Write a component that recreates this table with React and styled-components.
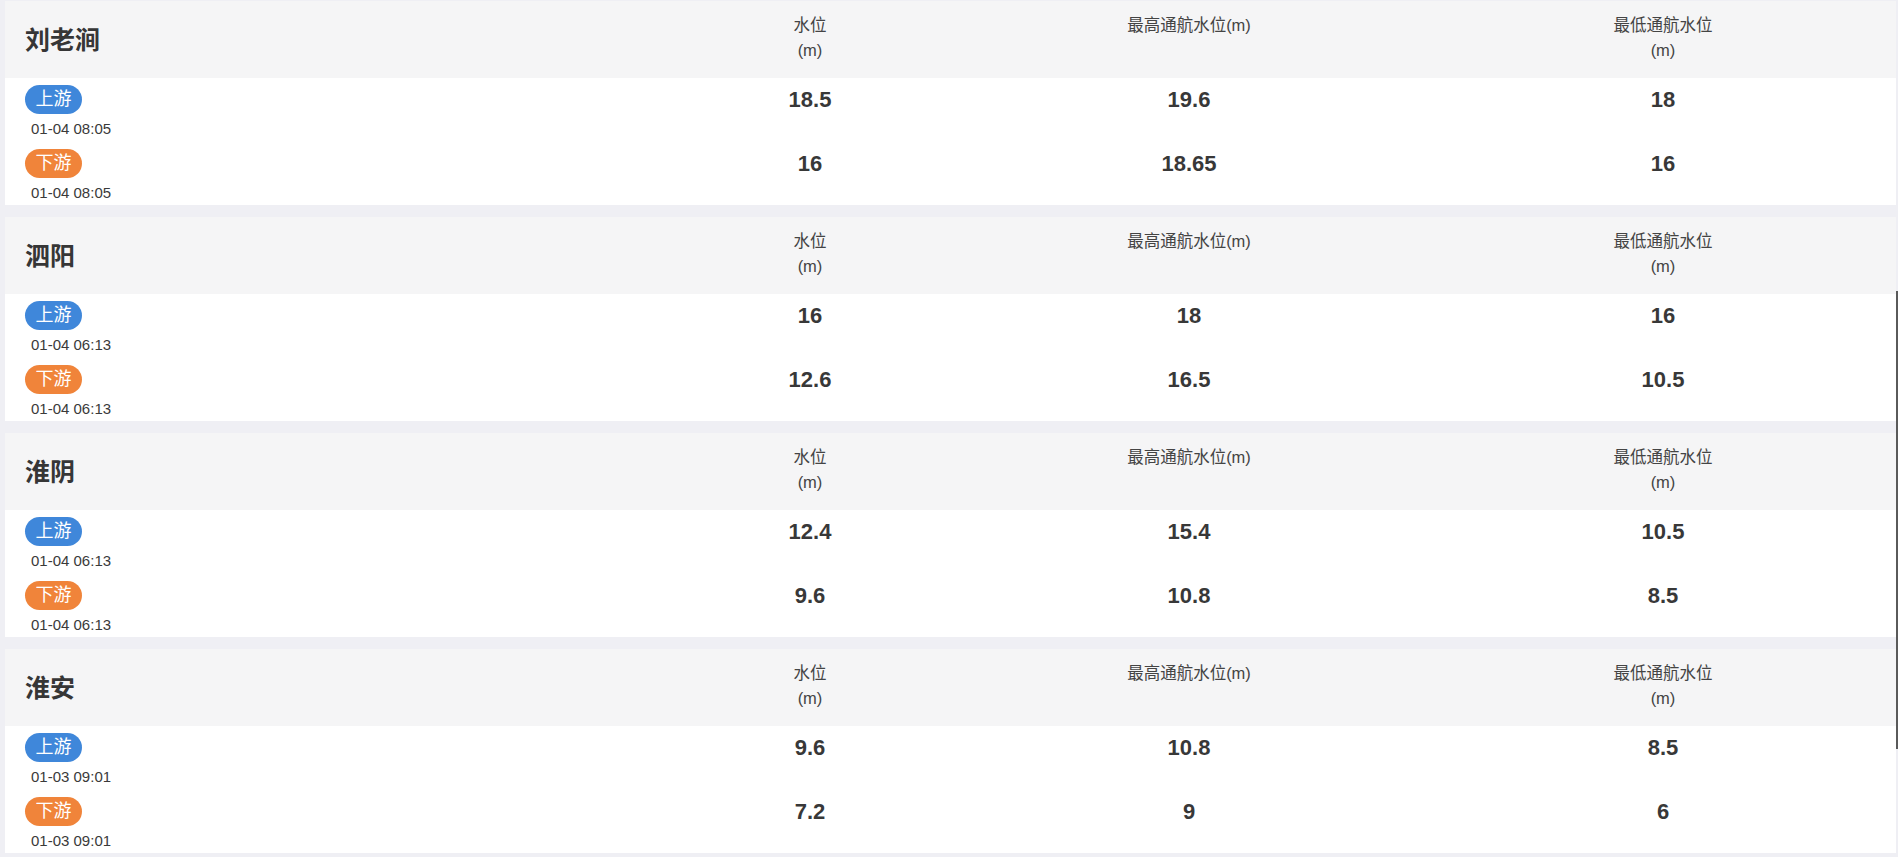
import React from "react";
import styled, { createGlobalStyle } from "styled-components";

const GlobalStyle = createGlobalStyle`
  html, body {
    margin: 0;
    padding: 0;
    background: #efeff4;
    overflow: hidden;
  }
  body {
    font-family: "Liberation Sans", "Noto Sans CJK SC", sans-serif;
    color: #333;
  }
`;

const Page = styled.div`
  display: flex;
  flex-direction: column;
  gap: 12px;
  padding: 1px 2px 0 5px;
  height: 857px;
  box-sizing: border-box;
`;

const Card = styled.section`
  display: flex;
  flex-direction: column;
  flex-shrink: 0;
  background: #fff;
`;

const Grid = styled.div`
  display: grid;
  grid-template-columns: 667fr 276fr 482fr 466fr;
`;

const Header = styled(Grid)`
  height: 77px;
  background: #f5f5f6;
  align-items: start;
`;

const StationName = styled.h2`
  margin: 0;
  align-self: center;
  padding-left: 20px;
  font-family: "Liberation Sans", "Noto Sans CJK SC", sans-serif;
  font-size: 25px;
  font-weight: 700;
  line-height: 30px;
  color: #363636;
`;

const Label = styled.div`
  padding-top: 12px;
  text-align: center;
  font-size: 16.5px;
  line-height: 24.5px;
  color: #444;
`;

const Body = styled.div`
  display: flex;
  flex-direction: column;
  gap: 3px;
  padding-bottom: 2px;
`;

const Row = styled(Grid)`
  padding-top: 7px;
  align-items: start;
`;

const Side = styled.div`
  display: flex;
  flex-direction: column;
  align-items: flex-start;
  gap: 5px;
  padding-left: 20px;
`;

const Badge = styled.span`
  display: inline-flex;
  align-items: center;
  justify-content: center;
  height: 29px;
  padding: 0 10.5px;
  border-radius: 15px;
  background: ${(p) => (p.$kind === "up" ? "#3f87da" : "#f0843a")};
  color: #fff;
  font-size: 18px;
  line-height: 29px;
`;

const Time = styled.div`
  margin-left: 6px;
  font-size: 15px;
  line-height: 20px;
  color: #3a3a3a;
`;

const Value = styled.div`
  text-align: center;
  font-size: 22px;
  font-weight: 700;
  line-height: 29px;
  color: #383838;
`;

const ScrollThumb = styled.div`
  position: fixed;
  left: 1896px;
  top: 291px;
  width: 2px;
  height: 458px;
  background: #5a5a5a;
`;

const stations = [
  {
    name: "刘老涧",
    rows: [
      { kind: "up", label: "上游", time: "01-04 08:05", v: ["18.5", "19.6", "18"] },
      { kind: "down", label: "下游", time: "01-04 08:05", v: ["16", "18.65", "16"] },
    ],
  },
  {
    name: "泗阳",
    rows: [
      { kind: "up", label: "上游", time: "01-04 06:13", v: ["16", "18", "16"] },
      { kind: "down", label: "下游", time: "01-04 06:13", v: ["12.6", "16.5", "10.5"] },
    ],
  },
  {
    name: "淮阴",
    rows: [
      { kind: "up", label: "上游", time: "01-04 06:13", v: ["12.4", "15.4", "10.5"] },
      { kind: "down", label: "下游", time: "01-04 06:13", v: ["9.6", "10.8", "8.5"] },
    ],
  },
  {
    name: "淮安",
    rows: [
      { kind: "up", label: "上游", time: "01-03 09:01", v: ["9.6", "10.8", "8.5"] },
      { kind: "down", label: "下游", time: "01-03 09:01", v: ["7.2", "9", "6"] },
    ],
  },
];

export default function App() {
  return (
    <>
      <GlobalStyle />
      <Page>
        {stations.map((s) => (
          <Card key={s.name}>
            <Header>
              <StationName>{s.name}</StationName>
              <Label>
                水位
                <br />
                (m)
              </Label>
              <Label>最高通航水位(m)</Label>
              <Label>
                最低通航水位
                <br />
                (m)
              </Label>
            </Header>
            <Body>
              {s.rows.map((r) => (
                <Row key={r.kind}>
                  <Side>
                    <Badge $kind={r.kind}>{r.label}</Badge>
                    <Time>{r.time}</Time>
                  </Side>
                  {r.v.map((v, i) => (
                    <Value key={i}>{v}</Value>
                  ))}
                </Row>
              ))}
            </Body>
          </Card>
        ))}
      </Page>
      <ScrollThumb />
    </>
  );
}
